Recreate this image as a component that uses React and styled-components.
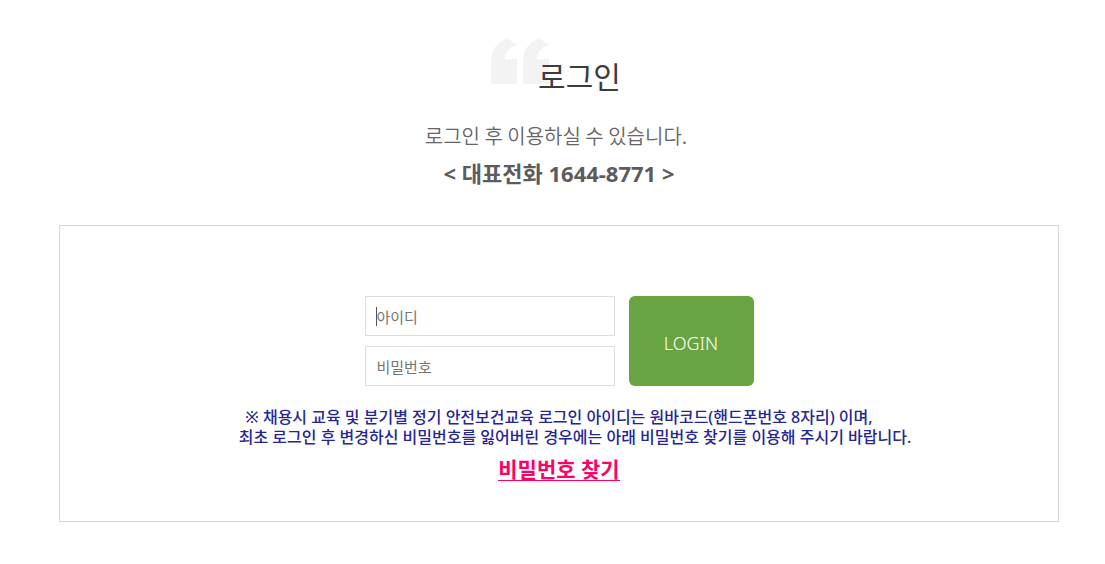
import React from 'react';
import styled, { createGlobalStyle } from 'styled-components';

const GlobalStyle = createGlobalStyle`
  * {
    box-sizing: border-box;
  }

  body {
    margin: 0;
    background: #fff;
    font-family: 'Noto Sans', 'Noto Sans CJK KR', sans-serif;
  }

  input,
  button {
    font-family: inherit;
  }
`;

const Page = styled.main`
  padding: 38px 46px 42px 59px;
`;

const Header = styled.header`
  display: flex;
  flex-direction: column;
  align-items: center;
  text-align: center;
`;

const TitleRow = styled.div`
  display: grid;
  grid-template-columns: 47px auto;
  height: 60px;
  margin-right: 6px;
`;

const QuoteMark = styled.svg`
  grid-area: 1 / 1;
  width: 58px;
  height: 46px;
  fill: #f3f3f3;
`;

const Title = styled.h1`
  grid-area: 1 / 2;
  position: relative;
  margin: 0;
  padding-top: 19px;
  font-size: 30px;
  font-weight: 400;
  line-height: 40px;
  color: #3c3c3c;
`;

const Subtitle = styled.p`
  margin: 24px 6px 0 0;
  font-family: 'Noto Sans CJK KR', sans-serif;
  font-size: 20px;
  font-weight: 350;
  line-height: 28px;
  color: #666;
`;

const Phone = styled.p`
  margin: 8px 0 0;
  font-size: 22px;
  font-weight: 700;
  line-height: 30px;
  color: #5c5c5c;
`;

const Panel = styled.section`
  max-width: 1000px;
  margin: 37px auto 0;
  padding: 70px 20px 40px;
  border: 1px solid #d7d7d7;
`;

const Form = styled.form`
  display: flex;
  justify-content: center;
  gap: 14px;
`;

const Fields = styled.div`
  display: flex;
  flex-direction: column;
  gap: 10px;
`;

const FieldLabel = styled.label`
  display: block;
  position: relative;

  /* text cursor of the focused, empty field */
  &:focus-within:has(:placeholder-shown)::after {
    content: '';
    position: absolute;
    top: 11px;
    left: 11px;
    width: 1px;
    height: 19px;
    background: #555;
  }
`;

const Field = styled.input`
  display: block;
  width: 250px;
  height: 40px;
  padding: 2px 11px 0;
  border: 1px solid #ddd;
  border-radius: 0;
  outline: none;
  background: #fff;
  font-size: 15px;
  color: #555;

  &:placeholder-shown {
    caret-color: transparent;
  }

  &::placeholder {
    color: #757575;
    opacity: 1;
  }
`;

const LoginButton = styled.button`
  width: 125px;
  padding: 4px 0 0;
  border: 0;
  border-radius: 6px;
  background: #68a442;
  font-size: 18px;
  font-weight: 300;
  color: #fff;
  cursor: pointer;
`;

const Notice = styled.p`
  margin: 21px 0 0;
  font-size: 16px;
  font-weight: 500;
  line-height: 20px;
  text-align: center;
  color: #262692;
`;

const NoticeLine = styled.span`
  display: block;
  padding-left: ${(props) => props.$indent || 0}px;
`;

const FindRow = styled.div`
  display: flex;
  justify-content: center;
  margin-top: 11px;
`;

const FindLink = styled.a`
  border-bottom: 1px solid #f06;
  font-size: 21px;
  font-weight: 700;
  line-height: 22px;
  color: #f06;
  text-decoration: none;
`;

const App = () => {
  return (
    <>
      <GlobalStyle />
      <Page>
        <Header>
          <TitleRow>
            <QuoteMark viewBox="0 0 58 46" aria-hidden="true">
              <path d="M0 46V24C0 12 6 4 16 0L26 7C19 9 14 14 14 21H26V46Z" />
              <path d="M32 46V24C32 12 38 4 48 0L58 7C51 9 46 14 46 21H58V46Z" />
            </QuoteMark>
            <Title>로그인</Title>
          </TitleRow>
          <Subtitle>로그인 후 이용하실 수 있습니다.</Subtitle>
          <Phone>&lt; 대표전화 1644-8771 &gt;</Phone>
        </Header>

        <Panel>
          <Form onSubmit={(e) => e.preventDefault()}>
            <Fields>
              <FieldLabel>
                <Field type="text" name="userId" placeholder="아이디" aria-label="아이디" autoFocus />
              </FieldLabel>
              <FieldLabel>
                <Field type="password" name="password" placeholder="비밀번호" aria-label="비밀번호" />
              </FieldLabel>
            </Fields>
            <LoginButton type="submit">LOGIN</LoginButton>
          </Form>

          <Notice>
            <NoticeLine>※ 채용시 교육 및 분기별 정기 안전보건교육 로그인 아이디는 원바코드(핸드폰번호 8자리) 이며,</NoticeLine>
            <NoticeLine $indent={32}>
              최초 로그인 후 변경하신 비밀번호를 잃어버린 경우에는 아래 비밀번호 찾기를 이용해 주시기 바랍니다.
            </NoticeLine>
          </Notice>
          <FindRow>
            <FindLink href="#find-password">비밀번호 찾기</FindLink>
          </FindRow>
        </Panel>
      </Page>
    </>
  );
};

export default App;
